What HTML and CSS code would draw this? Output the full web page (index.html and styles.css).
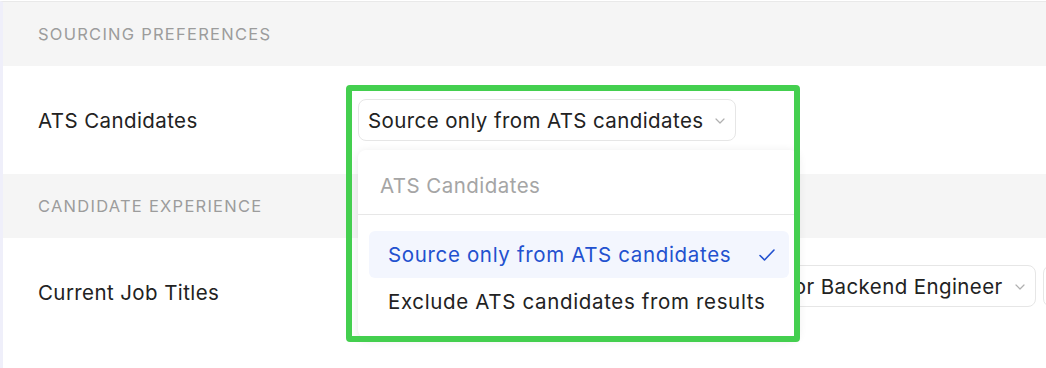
FILE: index.html
```html
<!DOCTYPE html>
<html>
<head>
<meta charset="utf-8">
<link rel="stylesheet" href="styles.css">
</head>
<body>
<div class="page">
  <div class="section-head">Sourcing Preferences</div>
  <div class="row">
    <div class="label">ATS Candidates</div>
    <div class="controls">
      <div class="select">
        <span>Source only from ATS candidates</span>
        <svg class="chev" width="10" height="6" viewBox="0 0 10 6"><polyline points="1,1 5,5 9,1" fill="none" stroke="#b0b0b0" stroke-width="1.2" stroke-linecap="round" stroke-linejoin="round"/></svg>
      </div>
    </div>
  </div>
  <div class="section-head">Candidate Experience</div>
  <div class="row">
    <div class="label">Current Job Titles</div>
    <div class="controls titles">
      <div class="select">
        <span>Senior Backend Engineer</span>
        <svg class="chev" width="10" height="6" viewBox="0 0 10 6"><polyline points="1,1 5,5 9,1" fill="none" stroke="#b0b0b0" stroke-width="1.2" stroke-linecap="round" stroke-linejoin="round"/></svg>
      </div>
      <div class="select empty"></div>
    </div>
  </div>

  <div class="menu">
    <div class="menu-head">ATS Candidates</div>
    <div class="menu-list">
      <div class="option selected">
        <span>Source only from ATS candidates</span>
        <svg width="18" height="14" viewBox="0 0 18 14"><polyline points="2,7.5 6.5,12 16,2" fill="none" stroke="#2251cf" stroke-width="1.6" stroke-linecap="round" stroke-linejoin="round"/></svg>
      </div>
      <div class="option">
        <span>Exclude ATS candidates from results</span>
      </div>
    </div>
  </div>
  <div class="highlight"></div>
</div>
</body>
</html>
```

FILE: styles.css
```css
* { box-sizing: border-box; }
html, body {
  margin: 0;
  padding: 0;
  background: #fff;
  overflow: hidden;
}
body {
  font-family: Inter, "Noto Sans", "Liberation Sans", sans-serif;
  color: #222;
  width: 1046px;
  height: 368px;
}
.page {
  position: relative;
  margin-top: 1px;
  border-top: 1px solid #e9e9e9;
  border-left: 3px solid #efeffa;
  height: 367px;
  overflow: hidden;
}
.section-head {
  height: 64px;
  background: #f5f5f5;
  display: flex;
  align-items: center;
  padding-left: 35px;
  text-transform: uppercase;
  font-size: 16.5px;
  letter-spacing: 1.25px;
  color: #9c9c9c;
}
.row {
  height: 108px;
  display: flex;
  align-items: center;
  padding-left: 35px;
}
.label {
  width: 320px;
  flex: none;
  font-size: 20.5px;
  letter-spacing: 0.4px;
  color: #222;
}
.controls {
  display: flex;
  gap: 7px;
  flex: none;
}
.controls.titles {
  align-self: flex-start;
  margin-top: 27px;
  margin-left: 382px;
}
.select {
  flex: none;
  height: 42px;
  display: flex;
  align-items: center;
  gap: 12px;
  padding: 0 10px 0 9px;
  border: 1px solid #e6e6e6;
  border-radius: 8px;
  font-size: 20.5px;
  letter-spacing: 0.4px;
  color: #222;
  white-space: nowrap;
}
.select.empty {
  width: 40px;
}
.chev { flex: none; margin-top: 1px; }
.menu {
  position: absolute;
  left: 355px;
  top: 148px;
  width: 440px;
  height: 188px;
  background: #fff;
  border-radius: 8px;
  box-shadow: 0 2px 10px rgba(0,0,0,0.10);
}
.menu-head {
  height: 65px;
  display: flex;
  align-items: center;
  padding: 6px 0 0 22px;
  font-size: 20.5px;
  letter-spacing: 0.45px;
  color: #a5a5a5;
  border-bottom: 1px solid #e7e7e7;
}
.menu-list {
  padding: 16px 9px 0 11px;
}
.option {
  height: 46px;
  display: flex;
  align-items: center;
  justify-content: space-between;
  padding: 0 13px 0 19px;
  border-radius: 6px;
  font-size: 20.5px;
  letter-spacing: 0.65px;
  color: #222;
  white-space: nowrap;
}
.option.selected {
  background: #f3f6fe;
  color: #2251cf;
  height: 47px;
}
.highlight {
  position: absolute;
  left: 343px;
  top: 83px;
  width: 454px;
  height: 257px;
  border: 6px solid #44cf4f;
  border-radius: 4px;
}
```
